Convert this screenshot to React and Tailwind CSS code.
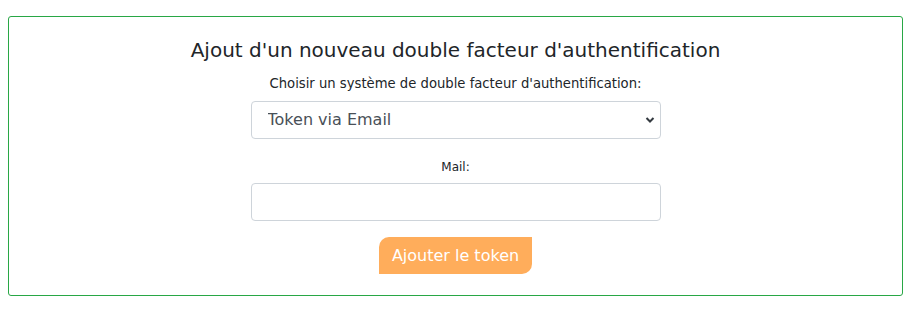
export default function App() {
  return (
    <div className="w-[916px] h-[311px] bg-white pt-[16px] pl-[8px]" style={{ fontFamily: '"DejaVu Sans", sans-serif' }}>
      <div className="w-[895px] h-[280px] border border-[#28a745] rounded-[3px] flex flex-col items-center pt-[19px]">
        <h2 className="text-[20px] leading-[28px] text-[#212529] font-normal">
          Ajout d'un nouveau double facteur d'authentification
        </h2>
        <label className="mt-[11px] text-[13.2px] leading-[18px] text-[#212529]">
          Choisir un système de double facteur d'authentification:
        </label>
        <div className="mt-[8px] relative w-[410px] h-[38px]">
          <select className="appearance-none w-full h-full border border-[#ced4da] rounded-[4px] pl-[16px] pr-8 text-[16px] text-[#495057] bg-white">
            <option>Token via Email</option>
          </select>
          <svg className="absolute right-[6px] top-[15px] w-[10px] h-[8px] pointer-events-none" viewBox="0 0 10 8">
            <path d="M1.5 2 L5 5.5 L8.5 2" fill="none" stroke="#343a40" strokeWidth="2" />
          </svg>
        </div>
        <label className="mt-[20px] text-[12px] leading-[16px] text-[#212529]">Mail:</label>
        <input type="text" className="mt-[8px] w-[410px] h-[38px] border border-[#ced4da] rounded-[4px] bg-white" />
        <button className="mt-[16px] h-[37px] px-[13px] bg-[#ffad5b] text-white text-[16px] rounded-tl-[10px] rounded-br-[10px]">
          Ajouter le token
        </button>
      </div>
    </div>
  );
}
